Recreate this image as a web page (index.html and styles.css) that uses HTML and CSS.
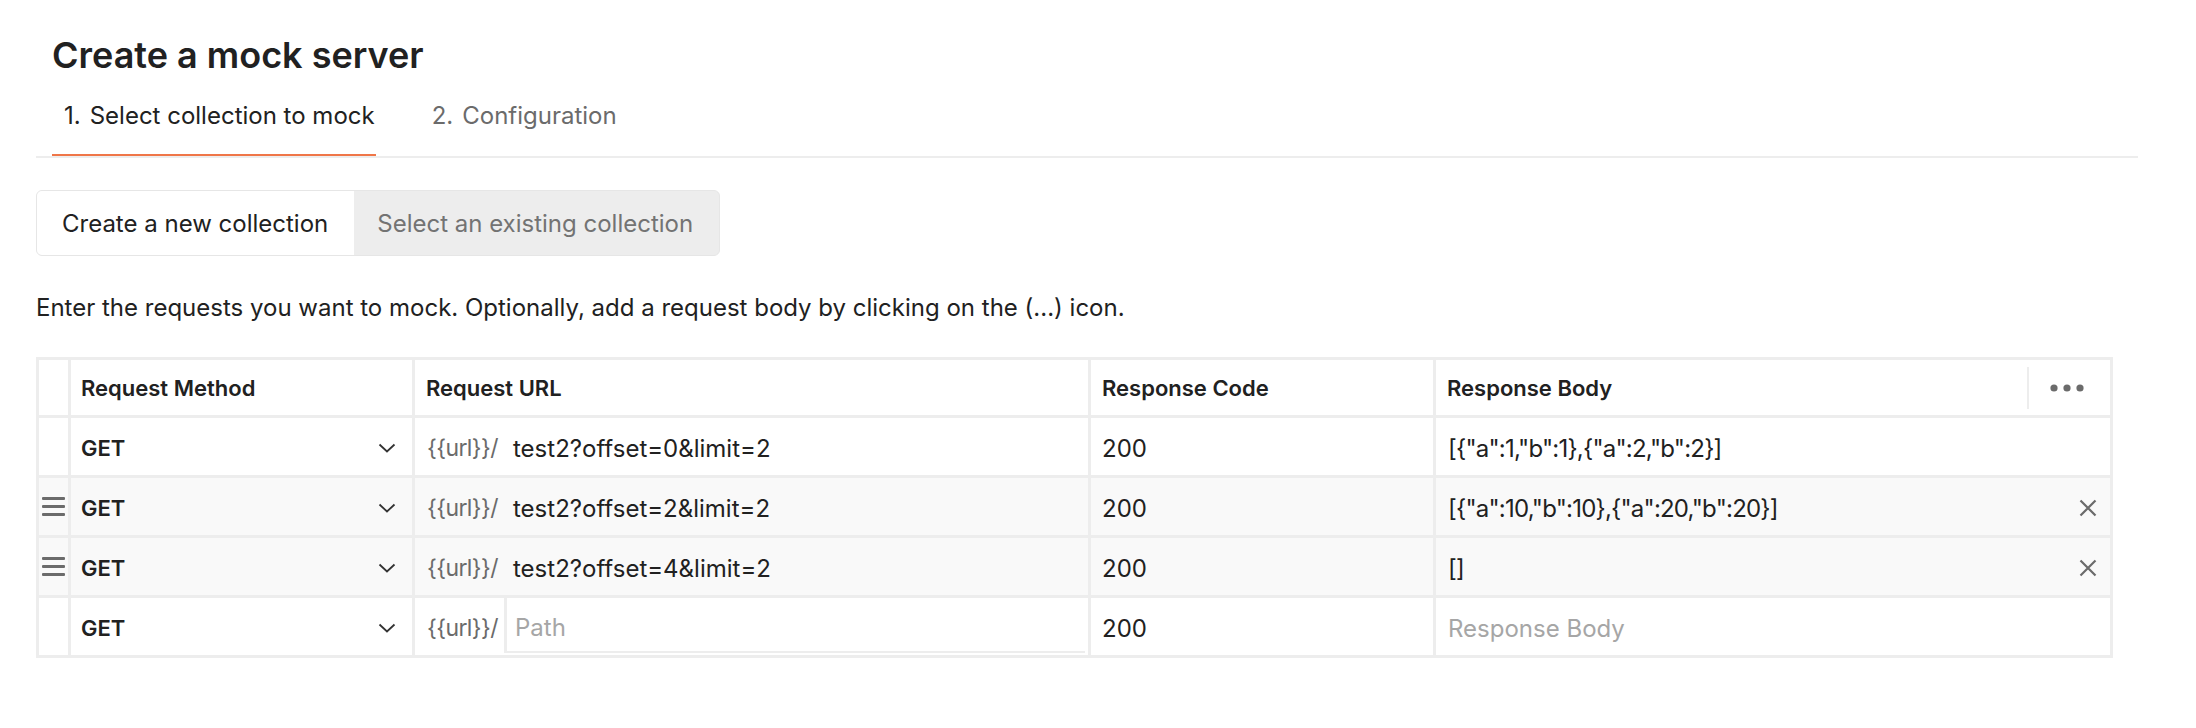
FILE: index.html
```html
<!DOCTYPE html>
<html lang="en">
<head>
<meta charset="utf-8">
<title>Create a mock server</title>
<link rel="stylesheet" href="styles.css">
</head>
<body>
<div class="page">
  <h1 class="title">Create a mock server</h1>
  <div class="tabs">
    <div class="tab active"><span class="num">1.</span>Select collection to mock</div>
    <div class="tab"><span class="num">2.</span>Configuration</div>
  </div>

  <div class="segmented">
    <div class="seg seg-on">Create a new collection</div>
    <div class="seg seg-off">Select an existing collection</div>
  </div>

  <p class="hint">Enter the requests you want to mock. Optionally, add a request body by clicking on the (...) icon.</p>

  <div class="grid">
    <!-- header -->
    <div class="cell drag"></div>
    <div class="cell head">Request Method</div>
    <div class="cell head">Request URL</div>
    <div class="cell head">Response Code</div>
    <div class="cell head head-body">
      <span class="head-label">Response Body</span>
      <span class="more">
        <svg width="34" height="8" viewBox="0 0 34 8"><circle cx="4" cy="4" r="3.6" fill="#6b6b6b"/><circle cx="17" cy="4" r="3.6" fill="#6b6b6b"/><circle cx="30" cy="4" r="3.6" fill="#6b6b6b"/></svg>
      </span>
    </div>

    <!-- row 1 -->
    <div class="cell drag"></div>
    <div class="cell method"><span>GET</span>
      <svg class="chev" width="18" height="10" viewBox="0 0 18 10"><path d="M1.5 1.5 L9 8.5 L16.5 1.5" fill="none" stroke="#333" stroke-width="1.8"/></svg>
    </div>
    <div class="cell url"><span class="prefix">{{url}}/</span><span class="path">test2?offset=0&amp;limit=2</span></div>
    <div class="cell code">200</div>
    <div class="cell body"><span class="json">[{"a":1,"b":1},{"a":2,"b":2}]</span></div>

    <!-- row 2 -->
    <div class="cell drag shaded">
      <span class="handle"><i></i><i></i><i></i></span>
    </div>
    <div class="cell method shaded"><span>GET</span>
      <svg class="chev" width="18" height="10" viewBox="0 0 18 10"><path d="M1.5 1.5 L9 8.5 L16.5 1.5" fill="none" stroke="#333" stroke-width="1.8"/></svg>
    </div>
    <div class="cell url shaded"><span class="prefix">{{url}}/</span><span class="path">test2?offset=2&amp;limit=2</span></div>
    <div class="cell code shaded">200</div>
    <div class="cell body shaded"><span class="json">[{"a":10,"b":10},{"a":20,"b":20}]</span>
      <svg class="close" width="18" height="18" viewBox="0 0 18 18"><path d="M1.5 1.5 L16.5 16.5 M16.5 1.5 L1.5 16.5" stroke="#6b6b6b" stroke-width="2.2" fill="none"/></svg>
    </div>

    <!-- row 3 -->
    <div class="cell drag shaded">
      <span class="handle"><i></i><i></i><i></i></span>
    </div>
    <div class="cell method shaded"><span>GET</span>
      <svg class="chev" width="18" height="10" viewBox="0 0 18 10"><path d="M1.5 1.5 L9 8.5 L16.5 1.5" fill="none" stroke="#333" stroke-width="1.8"/></svg>
    </div>
    <div class="cell url shaded"><span class="prefix">{{url}}/</span><span class="path">test2?offset=4&amp;limit=2</span></div>
    <div class="cell code shaded">200</div>
    <div class="cell body shaded"><span class="json">[]</span>
      <svg class="close" width="18" height="18" viewBox="0 0 18 18"><path d="M1.5 1.5 L16.5 16.5 M16.5 1.5 L1.5 16.5" stroke="#6b6b6b" stroke-width="2.2" fill="none"/></svg>
    </div>

    <!-- row 4 -->
    <div class="cell drag"></div>
    <div class="cell method"><span>GET</span>
      <svg class="chev" width="18" height="10" viewBox="0 0 18 10"><path d="M1.5 1.5 L9 8.5 L16.5 1.5" fill="none" stroke="#333" stroke-width="1.8"/></svg>
    </div>
    <div class="cell url url-new"><span class="prefix">{{url}}/</span><span class="path path-input placeholder">Path</span></div>
    <div class="cell code">200</div>
    <div class="cell body"><span class="placeholder">Response Body</span></div>
  </div>
</div>
</body>
</html>
```

FILE: styles.css
```css
* { box-sizing: border-box; }

html, body {
  margin: 0;
  padding: 0;
  background: #ffffff;
}

body {
  font-family: Inter, "Noto Sans", "Liberation Sans", sans-serif;
  color: #212121;
  font-size: 24px;
}

.page {
  padding: 0 58px 0 36px;
}

.title {
  margin: 33px 0 0 16px;
  font-size: 36px;
  line-height: 44px;
  font-weight: 600;
  color: #212121;
}

.tabs {
  display: flex;
  gap: 44px;
  margin-top: 24px;
  padding-left: 16px;
  border-bottom: 2px solid #ededed;
}

.tab {
  padding: 0 1px 23px 12px;
  line-height: 30px;
  font-size: 24px;
  color: #6b6b6b;
  border-bottom: 2px solid transparent;
}

.tab.active {
  color: #212121;
  border-bottom-color: #ef7648;
}

.num {
  margin-right: 9px;
}

.segmented {
  display: inline-flex;
  margin-top: 32px;
  height: 66px;
  border: 1px solid #e6e6e6;
  border-radius: 6px;
  overflow: hidden;
  background: #ededed;
}

.seg {
  display: flex;
  align-items: center;
  font-size: 24px;
}

.seg-on {
  background: #ffffff;
  color: #212121;
  padding: 0 26px 0 25px;
}

.seg-off {
  color: #737373;
  padding: 0 26px 0 23px;
}

.hint {
  margin: 37px 0 0 0;
  line-height: 30px;
  font-size: 24px;
  color: #212121;
}

.grid {
  display: grid;
  width: 2077px;
  margin-top: 34px;
  grid-template-columns: 29px 341px 673px 342px 674px;
  grid-template-rows: 55px 57px 57px 57px 57px;
  gap: 3px;
  border: 3px solid #ededed;
  background: #ededed;
}

.cell {
  background: #ffffff;
  display: flex;
  align-items: center;
  padding: 3px 12px 0;
  font-size: 24px;
  white-space: nowrap;
}

.cell.shaded {
  background: #f9f9f9;
}

.drag {
  padding: 0;
  justify-content: center;
}

.handle {
  display: flex;
  flex-direction: column;
  gap: 5px;
  width: 23px;
}

.handle i {
  display: block;
  height: 3px;
  background: #6b6b6b;
  border-radius: 1px;
}

.head {
  font-size: 22px;
  font-weight: 600;
  padding: 0 12px 0 11px;
}

.head:nth-child(2) {
  padding-left: 10px;
}

.head-body {
  padding-right: 0;
  justify-content: space-between;
}

.more {
  display: flex;
  align-items: center;
  justify-content: center;
  width: 83px;
  height: 42px;
  padding-right: 6px;
  border-left: 2px solid #ededed;
}

.method {
  font-size: 22px;
  font-weight: 600;
  justify-content: space-between;
  padding-left: 10px;
  padding-right: 16px;
}

.url {
  padding-left: 12px;
}

.prefix {
  color: #6b6b6b;
  font-size: 23px;
  letter-spacing: -0.6px;
  width: 77px;
  flex: none;
}

.path {
  padding-left: 9px;
  color: #212121;
}

.url-new {
  padding: 0 3px 0 12px;
  align-items: stretch;
}

.url-new .prefix {
  display: flex;
  align-items: center;
  padding-top: 3px;
}

.path-input {
  flex: 1;
  display: flex;
  align-items: center;
  margin-bottom: 2px;
  padding-top: 5px;
  border-left: 3px solid #ededed;
  border-bottom: 2px solid #ededed;
  padding-left: 8px;
}

.placeholder {
  color: #a6a6a6;
}

.code {
  padding-left: 11px;
}

.body {
  justify-content: space-between;
  padding-left: 12px;
  padding-right: 13px;
}

.json {
  letter-spacing: -0.8px;
}

.close {
  flex: none;
}
```
